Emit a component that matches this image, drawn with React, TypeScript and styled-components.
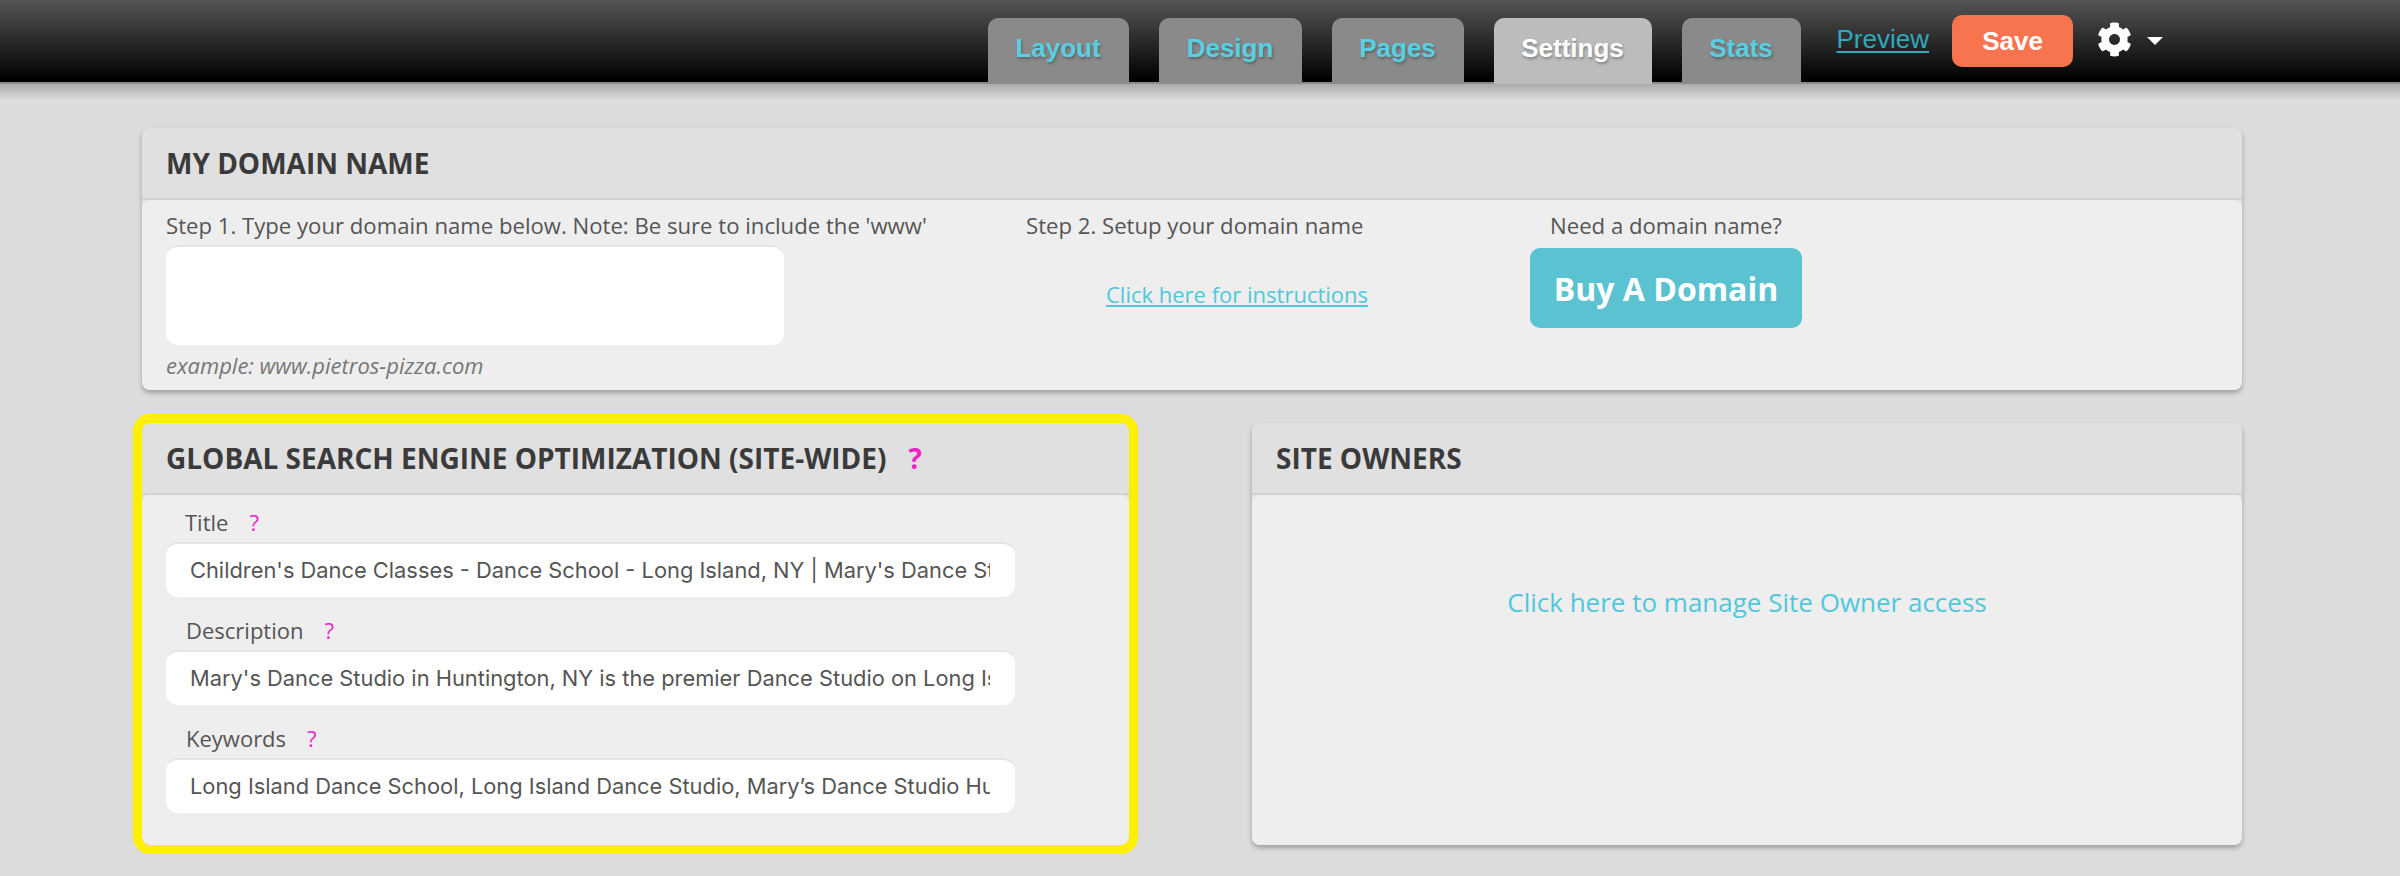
import React from "react";
import styled, { createGlobalStyle } from "styled-components";
import { FaCog } from "react-icons/fa";

const GlobalStyle = createGlobalStyle`
  html, body {
    margin: 0;
    padding: 0;
    background-color: #dcdcdc;
    font-family: "Open Sans", sans-serif;
    color: #555;
  }
  * {
    box-sizing: border-box;
  }
`;

const TopBar = styled.header`
  display: flex;
  justify-content: flex-end;
  align-items: flex-end;
  height: 84px;
  padding-right: 237px;
  background: linear-gradient(to bottom, #555 0%, #000 98%);
  border-bottom: 2px solid #8c8c8c;
  font-family: "Liberation Sans", Arial, sans-serif;
`;

const TopShadow = styled.div`
  height: 16px;
  background: linear-gradient(to bottom, #ababab, #dcdcdc);
`;

const Tab = styled.a<{ $active?: boolean; $width: number }>`
  display: flex;
  justify-content: center;
  align-items: center;
  width: ${(p) => p.$width}px;
  height: 66px;
  margin-right: 30px;
  margin-bottom: -2px;
  padding-bottom: 6px;
  border-radius: 10px 10px 0 0;
  background-color: ${(p) => (p.$active ? "#bcbcbc" : "#8a8a8a")};
  color: ${(p) => (p.$active ? "#fff" : "#58cfe2")};
  font-size: 26px;
  font-weight: bold;
  text-shadow: 1px 2px 3px rgba(0, 0, 0, 0.3);
`;

const Actions = styled.div`
  display: flex;
  align-items: center;
  align-self: flex-start;
  height: 52px;
  margin-top: 15px;
`;

const PreviewLink = styled.a`
  margin-left: 6px;
  margin-right: 23px;
  padding-bottom: 4px;
  color: #2fa9bc;
  font-size: 26px;
  text-decoration: underline;
  text-underline-offset: 3px;
`;

const SaveButton = styled.button`
  width: 121px;
  height: 52px;
  border: none;
  border-radius: 10px;
  background-color: #f7744f;
  color: #fff;
  font-family: inherit;
  font-size: 26px;
  font-weight: bold;
`;

const GearMenu = styled.div`
  display: flex;
  align-items: center;
  margin-left: 24px;
  margin-top: -3px;
  color: #fff;
  font-size: 35px;
  line-height: 0;
`;

const Caret = styled.span`
  width: 0;
  height: 0;
  margin-left: 15px;
  margin-top: 3px;
  border-left: 8px solid transparent;
  border-right: 8px solid transparent;
  border-top: 8px solid #fff;
`;

const Page = styled.main`
  padding: 28px 158px 31px 142px;
`;

const Row = styled.div`
  display: flex;
  justify-content: space-between;
  margin-top: 33px;
`;

const Panel = styled.section<{ $width?: number; $highlight?: boolean }>`
  width: ${(p) => (p.$width ? `${p.$width}px` : "100%")};
  border-radius: 8px;
  background-color: #e0e0e0;
  box-shadow: 0 3px 5px rgba(0, 0, 0, 0.28);
  ${(p) => p.$highlight && "outline: 9px solid #ffef00; outline-offset: 0;"}
`;

const PanelHeader = styled.h2`
  display: flex;
  align-items: center;
  height: 72px;
  margin: 0;
  padding-left: 24px;
  border-bottom: 2px solid #d2d2d2;
  border-radius: 8px 8px 0 0;
  color: #3a3a3a;
  font-size: 28px;
  font-weight: bold;
`;

const HeaderHelp = styled.span`
  margin-left: 22px;
  color: #f01fc8;
`;

const PanelBody = styled.div<{ $height: number }>`
  height: ${(p) => p.$height}px;
  border-radius: 8px;
  background-color: #eee;
`;

const DomainBody = styled(PanelBody)`
  display: flex;
  padding: 11px 0 0 24px;
`;

const StepColumn = styled.div<{ $width: number; $center?: boolean }>`
  display: flex;
  flex-direction: column;
  width: ${(p) => p.$width}px;
  font-size: 22.15px;
  line-height: 29px;
  ${(p) => p.$center && "align-items: center;"}
`;

const DomainInput = styled.input`
  display: block;
  width: 618px;
  height: 100px;
  margin-top: 5px;
  border: none;
  border-top: 2px solid #e4e4e4;
  border-radius: 12px;
  background-color: #fff;
  outline: none;
`;

const Example = styled.em`
  margin-top: 6px;
  color: #777;
  font-size: 22px;
`;

const InstructionsLink = styled.a`
  margin-top: 40px;
  margin-left: 80px;
  color: #4fc8dc;
  font-size: 22px;
  text-decoration: underline;
`;

const BuyButton = styled.button`
  width: 272px;
  height: 80px;
  margin-top: 8px;
  border: none;
  border-radius: 10px;
  background-color: #5bc2d2;
  color: #fff;
  font-family: inherit;
  font-size: 32px;
  font-weight: bold;
`;

const SeoBody = styled(PanelBody)`
  padding: 13px 0 0 24px;
`;

const FieldLabel = styled.label<{ $inset: number }>`
  display: block;
  margin-left: ${(p) => p.$inset}px;
  font-size: 22px;
  line-height: 29px;
`;

const LabelHelp = styled.span`
  margin-left: 21px;
  color: #f01fc8;
`;

const FieldInput = styled.input`
  display: block;
  width: 849px;
  height: 55px;
  margin: 5px 0 19px;
  padding: 0 25px 2px 24px;
  border: none;
  border-top: 2px solid #e4e4e4;
  border-radius: 12px;
  background-color: #fff;
  color: #555;
  font-family: "Inter", sans-serif;
  font-size: 21.85px;
  outline: none;
`;

const OwnersBody = styled(PanelBody)`
  display: flex;
  justify-content: center;
  padding-top: 89px;
`;

const OwnersLink = styled.a`
  color: #4fc8dc;
  font-size: 26px;
  line-height: 36px;
`;

const tabs = [
  { label: "Layout", width: 141 },
  { label: "Design", width: 143 },
  { label: "Pages", width: 132 },
  { label: "Settings", width: 158, active: true },
  { label: "Stats", width: 119 },
];

const seoFields = [
  {
    label: "Title",
    inset: 19,
    value: "Children's Dance Classes - Dance School - Long Island, NY | Mary's Dance Studio",
  },
  {
    label: "Description",
    inset: 20,
    value: "Mary's Dance Studio in Huntington, NY is the premier Dance Studio on Long Island",
  },
  {
    label: "Keywords",
    inset: 20,
    value: "Long Island Dance School, Long Island Dance Studio, Mary’s Dance Studio Huntington",
  },
];

export default function App() {
  return (
    <>
      <GlobalStyle />
      <TopBar>
        {tabs.map((tab) => (
          <Tab key={tab.label} $width={tab.width} $active={tab.active}>
            {tab.label}
          </Tab>
        ))}
        <Actions>
          <PreviewLink href="#">Preview</PreviewLink>
          <SaveButton>Save</SaveButton>
          <GearMenu>
            <FaCog />
            <Caret />
          </GearMenu>
        </Actions>
      </TopBar>
      <TopShadow />
      <Page>
        <Panel>
          <PanelHeader>MY DOMAIN NAME</PanelHeader>
          <DomainBody $height={190}>
            <StepColumn $width={860}>
              Step 1. Type your domain name below. Note: Be sure to include the 'www'
              <DomainInput />
              <Example>example: www.pietros-pizza.com</Example>
            </StepColumn>
            <StepColumn $width={504}>
              Step 2. Setup your domain name
              <InstructionsLink href="#">Click here for instructions</InstructionsLink>
            </StepColumn>
            <StepColumn $width={272} $center>
              Need a domain name?
              <BuyButton>Buy A Domain</BuyButton>
            </StepColumn>
          </DomainBody>
        </Panel>
        <Row>
          <Panel $width={987} $highlight>
            <PanelHeader>
              GLOBAL SEARCH ENGINE OPTIMIZATION (SITE-WIDE)
              <HeaderHelp>?</HeaderHelp>
            </PanelHeader>
            <SeoBody $height={350}>
              {seoFields.map((field) => (
                <div key={field.label}>
                  <FieldLabel $inset={field.inset}>
                    {field.label}
                    <LabelHelp>?</LabelHelp>
                  </FieldLabel>
                  <FieldInput readOnly defaultValue={field.value} />
                </div>
              ))}
            </SeoBody>
          </Panel>
          <Panel $width={990}>
            <PanelHeader>SITE OWNERS</PanelHeader>
            <OwnersBody $height={350}>
              <OwnersLink>Click here to manage Site Owner access</OwnersLink>
            </OwnersBody>
          </Panel>
        </Row>
      </Page>
    </>
  );
}
